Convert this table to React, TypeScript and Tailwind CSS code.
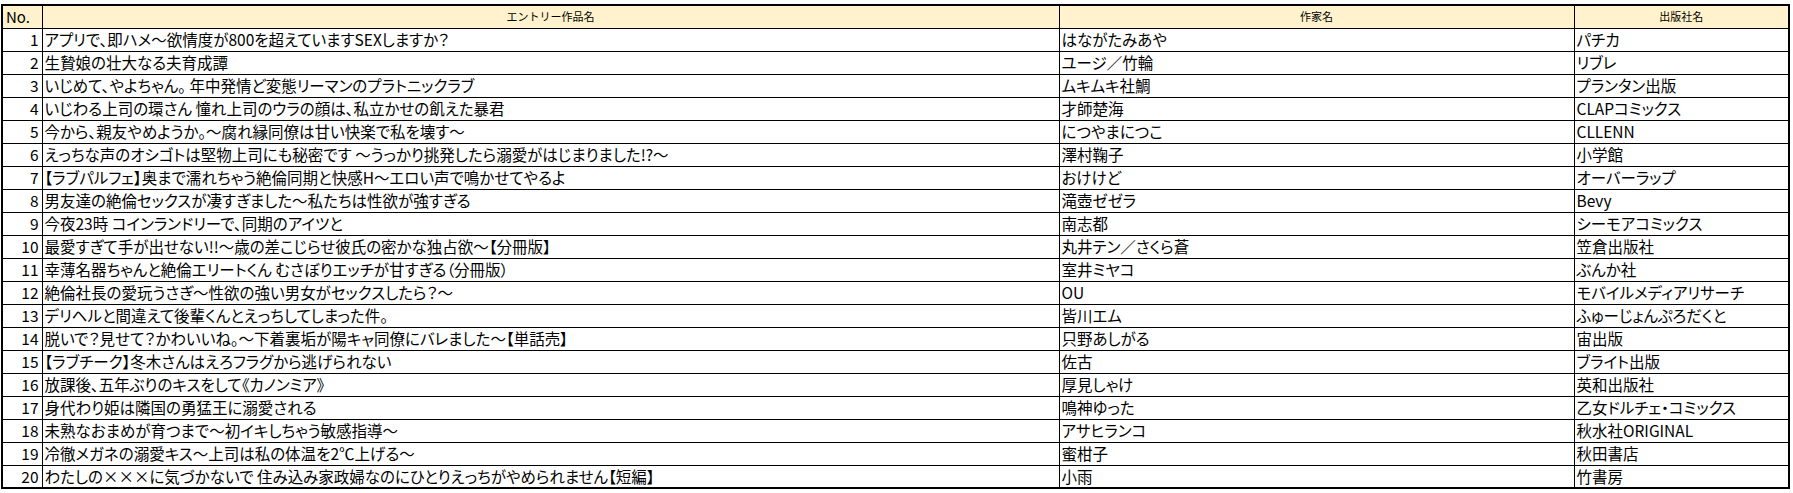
import React from "react";

type Row = { title: string; author: string; publisher: string };

const rows: Row[] = [
  { title: "アプリで、即ハメ～欲情度が800を超えていますSEXしますか？", author: "はながたみあや", publisher: "パチカ" },
  { title: "生贄娘の壮大なる夫育成譚", author: "ユージ／竹輪", publisher: "リブレ" },
  { title: "いじめて、やよちゃん。 年中発情ど変態リーマンのプラトニックラブ", author: "ムキムキ社鯛", publisher: "プランタン出版" },
  { title: "いじわる上司の環さん 憧れ上司のウラの顔は、私立かせの飢えた暴君", author: "才師楚海", publisher: "CLAPコミックス" },
  { title: "今から、親友やめようか。～腐れ縁同僚は甘い快楽で私を壊す～", author: "につやまにつこ", publisher: "CLLENN" },
  { title: "えっちな声のオシゴトは堅物上司にも秘密です ～うっかり挑発したら溺愛がはじまりました!?～", author: "澤村鞠子", publisher: "小学館" },
  { title: "【ラブパルフェ】奥まで濡れちゃう絶倫同期と快感H～エロい声で鳴かせてやるよ", author: "おけけど", publisher: "オーバーラップ" },
  { title: "男友達の絶倫セックスが凄すぎました～私たちは性欲が強すぎる", author: "滝壺ゼゼラ", publisher: "Bevy" },
  { title: "今夜23時 コインランドリーで、同期のアイツと", author: "南志都", publisher: "シーモアコミックス" },
  { title: "最愛すぎて手が出せない!!～歳の差こじらせ彼氏の密かな独占欲～【分冊版】", author: "丸井テン／さくら蒼", publisher: "笠倉出版社" },
  { title: "幸薄名器ちゃんと絶倫エリートくん むさぼりエッチが甘すぎる（分冊版）", author: "室井ミヤコ", publisher: "ぶんか社" },
  { title: "絶倫社長の愛玩うさぎ～性欲の強い男女がセックスしたら？～", author: "OU", publisher: "モバイルメディアリサーチ" },
  { title: "デリヘルと間違えて後輩くんとえっちしてしまった件。", author: "皆川エム", publisher: "ふゅーじょんぷろだくと" },
  { title: "脱いで？見せて？かわいいね。～下着裏垢が陽キャ同僚にバレました～【単話売】", author: "只野あしがる", publisher: "宙出版" },
  { title: "【ラブチーク】冬木さんはえろフラグから逃げられない", author: "佐古", publisher: "ブライト出版" },
  { title: "放課後、五年ぶりのキスをして《カノンミア》", author: "厚見しゃけ", publisher: "英和出版社" },
  { title: "身代わり姫は隣国の勇猛王に溺愛される", author: "鳴神ゆった", publisher: "乙女ドルチェ・コミックス" },
  { title: "未熟なおまめが育つまで～初イキしちゃう敏感指導～", author: "アサヒランコ", publisher: "秋水社ORIGINAL" },
  { title: "冷徹メガネの溺愛キス～上司は私の体温を2℃上げる～", author: "蜜柑子", publisher: "秋田書店" },
  { title: "わたしの×××に気づかないで 住み込み家政婦なのにひとりえっちがやめられません【短編】", author: "小雨", publisher: "竹書房" },
];

const cell = "border border-black h-[23px] p-0 align-middle whitespace-nowrap overflow-hidden";

export default function App() {
  return (
    <div className="bg-white w-[1793px] h-[493px] pt-[4px] pl-[1px] text-black font-['Noto_Sans_CJK_JP','Noto_Sans',sans-serif]">
      <table className="border-collapse border-2 border-black table-fixed w-[1787px]">
        <colgroup>
          <col className="w-[40px]" />
          <col className="w-[1017px]" />
          <col className="w-[515px]" />
          <col className="w-[215px]" />
        </colgroup>
        <thead>
          <tr className="bg-[#fff2cc]">
            <th className={`${cell} text-left font-normal text-[15px] leading-none pl-[3px]`}>No.</th>
            <th className={`${cell} text-center font-normal text-[11px] leading-none`}>エントリー作品名</th>
            <th className={`${cell} text-center font-normal text-[11px] leading-none`}>作家名</th>
            <th className={`${cell} text-center font-normal text-[11px] leading-none`}>出版社名</th>
          </tr>
        </thead>
        <tbody>
          {rows.map((r, i) => (
            <tr key={i} className="text-[15.5px] leading-none [font-feature-settings:'palt']">
              <td className={`${cell} text-right pr-[3px]`}>{i + 1}</td>
              <td className={`${cell} pl-[2px]`}>{r.title}</td>
              <td className={`${cell} pl-[2px]`}>{r.author}</td>
              <td className={`${cell} pl-[2px]`}>{r.publisher}</td>
            </tr>
          ))}
        </tbody>
      </table>
    </div>
  );
}
